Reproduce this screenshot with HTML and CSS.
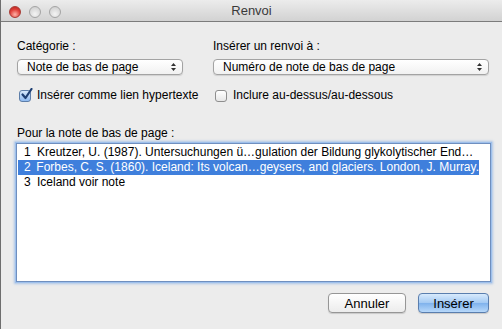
FILE: index.html
```html
<!DOCTYPE html>
<html lang="fr">
<head>
    <meta charset="UTF-8">
    <title>Renvoi</title>
    <link rel="stylesheet" href="styles.css">
</head>
<body>
    <div class="window">
        <div class="titlebar">
            <div class="lights">
                <span class="light close"></span>
                <span class="light"></span>
                <span class="light"></span>
            </div>
            <div class="title">Renvoi</div>
        </div>

        <div class="content">
            <div class="fields">
                <div class="field field-left">
                    <div class="label">Catégorie :</div>
                    <div class="popup">
                        <span>Note de bas de page</span>
                        <span class="arrows">
                            <svg width="5" height="8" viewBox="0 0 5 8"><path d="M2.5 0 L5 3 H0 Z M0 5 H5 L2.5 8 Z" fill="#333"/></svg>
                        </span>
                    </div>
                </div>
                <div class="field field-right">
                    <div class="label">Insérer un renvoi à :</div>
                    <div class="popup">
                        <span>Numéro de note de bas de page</span>
                        <span class="arrows">
                            <svg width="5" height="8" viewBox="0 0 5 8"><path d="M2.5 0 L5 3 H0 Z M0 5 H5 L2.5 8 Z" fill="#333"/></svg>
                        </span>
                    </div>
                </div>
            </div>

            <div class="checks">
                <label class="check field-left">
                    <span class="box checked">
                        <svg width="13" height="13" viewBox="0 0 13 13"><path d="M2.5 6.5 L5.5 10 L11.5 1" stroke="#1e3f73" stroke-width="2.2" fill="none" stroke-linecap="round" stroke-linejoin="round"/></svg>
                    </span>
                    Insérer comme lien hypertexte
                </label>
                <label class="check field-right">
                    <span class="box"></span>
                    Inclure au-dessus/au-dessous
                </label>
            </div>

            <div class="label list-label">Pour la note de bas de page :</div>

            <div class="list">
                <div class="list-row"><span class="num">1</span><span>Kreutzer, U. (1987). Untersuchungen ü…gulation der Bildung glykolytischer End…</span></div>
                <div class="list-row selected"><span class="num">2</span><span>Forbes, C. S. (1860). Iceland: Its volcan…geysers, and glaciers. London, J. Murray.</span></div>
                <div class="list-row"><span class="num">3</span><span>Iceland voir note</span></div>
            </div>

            <div class="buttons">
                <button class="btn">Annuler</button>
                <button class="btn btn-default">Insérer</button>
            </div>
        </div>
    </div>
</body>
</html>
```

FILE: styles.css
```css
body {
    margin: 0;
    font-family: "Liberation Sans", Arial, sans-serif;
    font-size: 12px;
    color: #000;
    background-color: #ececec;
}

.window {
    width: 502px;
    height: 329px;
    box-sizing: border-box;
    border-left: 1px solid #6e6e6e;
    background-color: #ececec;
    overflow: hidden;
}

.titlebar {
    height: 21px;
    border-bottom: 1px solid #7c7c7c;
    background: linear-gradient(#ececec, #d2d2d2);
    display: flex;
    align-items: center;
    position: relative;
}

.lights {
    display: flex;
    gap: 8px;
    padding-left: 8px;
    padding-top: 2px;
}

.light {
    width: 12px;
    height: 12px;
    border-radius: 50%;
    box-sizing: border-box;
    border: 1px solid #a4a4a4;
    background: radial-gradient(circle at 50% 70%, #f4f4f4, #c9c9c9);
}

.light.close {
    border-color: #a83a34;
    background: radial-gradient(circle at 50% 75%, #ffb3a8, #e0413a 55%, #b5211d);
}

.title {
    position: absolute;
    left: 0;
    right: 0;
    top: 3px;
    text-align: center;
    font-size: 13px;
    color: #3a3a3a;
}

.content {
    padding: 17px 13px 0 16px;
}

.fields,
.checks {
    display: flex;
}

.field-left {
    width: 196px;
}

.field-right {
    flex: 1;
}

.label {
    line-height: 15px;
    margin-bottom: 5px;
}

.popup {
    height: 16px;
    box-sizing: border-box;
    border: 1px solid #a3a3a3;
    border-radius: 4px;
    background: linear-gradient(#ffffff, #f1f1f1);
    box-shadow: 0 1px 1px rgba(0, 0, 0, 0.12);
    display: flex;
    align-items: center;
    justify-content: space-between;
    padding: 0 6px 0 9px;
    line-height: 14px;
}

.field-left .popup {
    width: 166px;
}

.arrows {
    display: flex;
    align-items: center;
}

.checks {
    margin-top: 13px;
}

.check {
    display: flex;
    align-items: center;
    line-height: 15px;
}

.box {
    width: 12px;
    height: 12px;
    box-sizing: border-box;
    border: 1px solid #8e8e8e;
    border-radius: 3px;
    background: linear-gradient(#ffffff, #e6e6e6);
    margin: 0 6px 0 2px;
    position: relative;
}

.box.checked {
    border-color: #5d7ea9;
    background: linear-gradient(#d6e8fb, #8fbaf0);
}

.box svg {
    position: absolute;
    left: 0;
    top: -3px;
}

.list-label {
    margin-top: 23px;
    margin-bottom: 2px;
}

.list {
    margin: 0 -2px 0 -1px;
    height: 139px;
    box-sizing: border-box;
    border: 1px solid #6f8fbf;
    box-shadow: 0 0 0 1px #9ec0ec, 0 0 2px 2px rgba(120, 165, 225, 0.55);
    background-color: #fff;
    padding: 1px 11px 0 1px;
}

.list-row {
    height: 15px;
    line-height: 15px;
    display: flex;
    white-space: nowrap;
    overflow: hidden;
    padding-left: 6px;
}

.list-row.selected {
    background-color: #3f7fdc;
    color: #fff;
}

.num {
    width: 13px;
}

.buttons {
    display: flex;
    justify-content: flex-end;
    gap: 12px;
    margin-top: 11px;
}

.btn {
    height: 20px;
    box-sizing: border-box;
    border: 1px solid #969696;
    border-radius: 4px;
    background: linear-gradient(#ffffff, #ececec);
    box-shadow: 0 1px 1px rgba(0, 0, 0, 0.15);
    font-family: "Liberation Sans", Arial, sans-serif;
    font-size: 13px;
    padding: 0;
    width: 78px;
    color: #000;
}

.btn-default {
    width: 71px;
    border-color: #5a7eae;
    background: linear-gradient(#d8eafc, #a2c9f3 50%, #7fb2ec 51%, #b7d8fa);
}
```
